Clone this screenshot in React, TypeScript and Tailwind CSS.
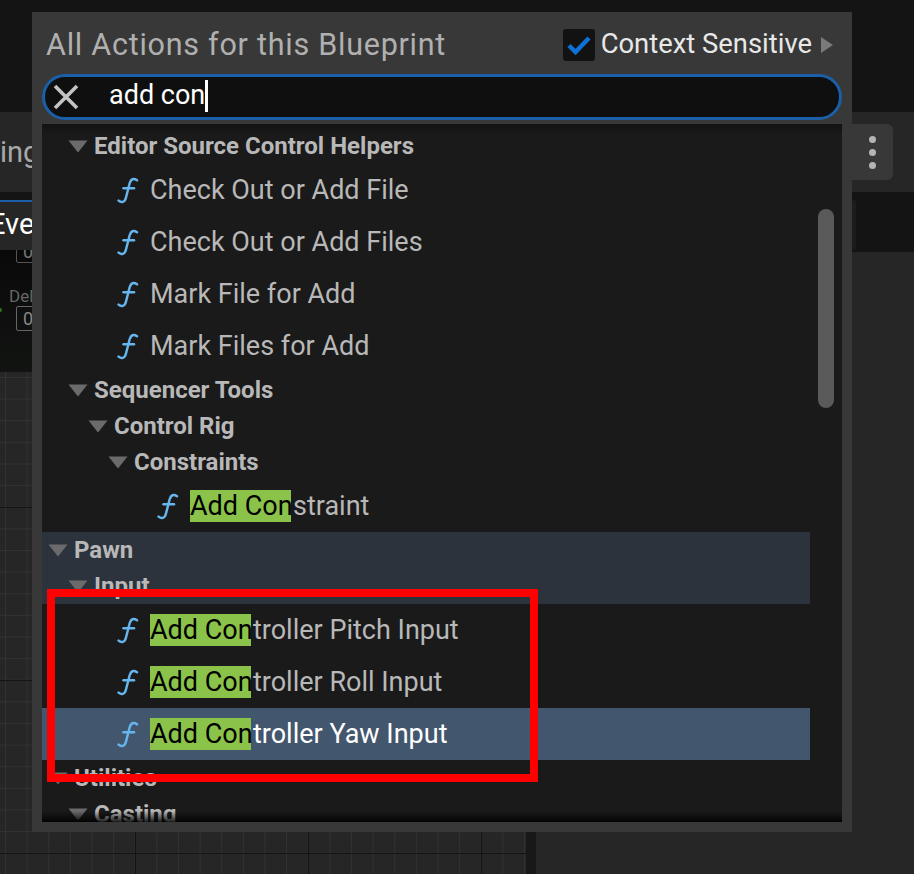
import React from "react";

const Tri = ({ className = "" }: { className?: string }) => (
  <svg width="20" height="13" viewBox="0 0 20 13" className={"shrink-0 " + className}>
    <path d="M0.5 0.5H19.5L10 12.5Z" fill="#6b6b6b" />
  </svg>
);

const Fn = () => (
  <svg width="22" height="27" viewBox="0 0 22 27" className="-ml-[1.5px] shrink-0" fill="none" stroke="#66b6ee" strokeWidth="2.5" strokeLinecap="round">
    <path d="M20 3.2C16.5 .8 13.8 2 12.6 6.5L9 20.5C7.8 25.6 4.3 26 1.6 23.6" />
    <path d="M6.5 11.2H17" />
  </svg>
);

const secPad: Record<number, string> = {
  0: "pl-[6px]",
  1: "pl-[26px]",
  2: "pl-[46px]",
  3: "pl-[66px]",
};

const Section = ({ level, label, band }: { level: number; label: string; band?: boolean }) => (
  <div className={"flex h-[36px] w-[768px] shrink-0 items-center gap-[6px] text-[24px] font-bold leading-none text-[#b8b8b8] " + secPad[level] + (band ? " bg-[#2c333d]" : "")}>
    <Tri />
    <span>{label}</span>
  </div>
);

const Func = ({ deep, hi, label, selected }: { deep?: boolean; hi?: string; label: string; selected?: boolean }) => (
  <div className={"flex h-[52px] w-[768px] shrink-0 items-center text-[27px] leading-none " + (deep ? "pl-[116px]" : "pl-[76px]") + (selected ? " bg-[#42566e] text-white" : " text-[#b8b8b8]")}>
    <span className="flex w-[32px] shrink-0 items-center"><Fn /></span>
    {hi && <span className="flex h-[32px] w-[101px] shrink-0 items-center whitespace-nowrap bg-[#8bc34a] text-black">{hi}</span>}
    <span className={hi ? "ml-[2px]" : ""}>{label}</span>
  </div>
);

export default function App() {
  return (
    <div className="relative flex h-[874px] w-[914px] flex-col overflow-hidden bg-[#141414] font-['Roboto',sans-serif]">
      {/* Editor behind the popup */}
      <div className="h-[112px] shrink-0 bg-[#141414]" />
      <div className="flex h-[80px] shrink-0 items-center justify-between bg-[#262626] pr-[21px]">
        <span className="text-[29px] leading-none text-[#a8a8a8]">ing</span>
        <div className="flex h-[56px] w-[60px] flex-col items-center justify-center gap-[6px] rounded-[6px] bg-[#383838] pl-[19px]">
          <i className="h-[7px] w-[7px] rounded-full bg-[#b4b4b4]" />
          <i className="h-[7px] w-[7px] rounded-full bg-[#b4b4b4]" />
          <i className="h-[7px] w-[7px] rounded-full bg-[#b4b4b4]" />
        </div>
      </div>
      <div className="flex min-h-0 flex-1">
        <div className="flex w-[526px] shrink-0 flex-col">
          <div className="h-[8px] shrink-0 bg-[#141414]" />
          <div className="h-[2px] shrink-0 bg-[#1a5fa8]" />
          <div className="flex h-[48px] shrink-0 items-center overflow-hidden bg-[#262626] pb-[4px] text-[29px] leading-none text-white">
            <span className="-ml-[11px]">Eve</span>
          </div>
          <div className="relative flex h-[122px] shrink-0 flex-col overflow-hidden bg-gradient-to-b from-[#090909] to-[#121412] pl-[16px]">
            <div className="-mt-[9px] flex h-[22px] w-[40px] shrink-0 items-center rounded-[2px] border border-[#555] pl-[6px] text-[18px] leading-none text-[#777]">0</div>
            <div className="mt-[25px] -ml-[7px] text-[17px] leading-none text-[#666]">Del</div>
            <div className="mt-[1px] flex h-[25px] w-[40px] shrink-0 items-center rounded-[2px] border border-[#666] pl-[6px] text-[18px] leading-none text-[#888]">0</div>
            <i className="absolute left-0 top-[58px] h-[4px] w-[2px] rounded-r bg-[#2f7a1a]" />
          </div>
          <div className="min-h-0 flex-1 bg-[#262626] bg-[linear-gradient(to_right,#141414_1px,transparent_1px),linear-gradient(to_bottom,#141414_1px,transparent_1px),linear-gradient(to_right,#323232_1px,transparent_1px),linear-gradient(to_bottom,#323232_1px,transparent_1px)] bg-[size:173px_173px,173px_173px,21.625px_21.625px,21.625px_21.625px] bg-[position:135px_135px,135px_135px,5px_5px,5px_5px]" />
        </div>
        <div className="w-[10px] shrink-0 bg-[#181818]" />
        <div className="flex min-w-0 flex-1 flex-col bg-[#262626]">
          <div className="h-[60px] shrink-0 bg-[#141414] pb-[2px] pt-[8px]">
            <div className="ml-[316px] h-full w-[4px] rounded-r-[3px] bg-[#1c1c1c]" />
          </div>
        </div>
      </div>

      {/* Action menu popup */}
      <div className="absolute left-[32px] top-[12px] flex h-[820px] w-[820px] flex-col bg-[#383838] px-[10px] pb-[10px]">
        <div className="flex h-[62px] shrink-0 items-center justify-between pl-[4px] pr-[9px] pt-[4px]">
          <span className="pt-[1px] text-[30.5px] leading-none tracking-[0.75px] text-[#b0b0b0]">All Actions for this Blueprint</span>
          <div className="flex items-center">
            <div className="flex h-[32px] w-[32px] items-center justify-center rounded-[3px] bg-[#121212]">
              <svg width="24" height="20" viewBox="0 0 24 20" fill="none" stroke="#0f70d7" strokeWidth="4.5">
                <path d="M2 10.5L8.5 17L22 3" />
              </svg>
            </div>
            <span className="ml-[6px] text-[27.4px] leading-none text-[#e8e8e8]">Context Sensitive</span>
            <svg width="12" height="16" viewBox="0 0 12 16" className="ml-[9px]">
              <path d="M0 0L12 8L0 16Z" fill="#7a7a7a" />
            </svg>
          </div>
        </div>
        <div className="flex h-[46px] shrink-0 items-center rounded-full border-[3px] border-[#1a5fa8] bg-[#0f0f0f] pl-[8px]">
          <svg width="26" height="26" viewBox="0 0 26 26" fill="none" stroke="#c4c4c4" strokeWidth="3.6" className="shrink-0">
            <path d="M2 2L24 24M24 2L2 24" />
          </svg>
          <span className="mb-[3px] ml-[30px] text-[27px] leading-none text-white">add con</span>
          <i className="mb-[2px] h-[32px] w-[3px] bg-white" />
        </div>
        <div className="relative mt-[4px] min-h-0 flex-1 overflow-hidden bg-[#1a1a1a] pt-[4px]">
          <div className="flex flex-col">
            <Section level={1} label="Editor Source Control Helpers" />
            <Func label="Check Out or Add File" />
            <Func label="Check Out or Add Files" />
            <Func label="Mark File for Add" />
            <Func label="Mark Files for Add" />
            <Section level={1} label="Sequencer Tools" />
            <Section level={2} label="Control Rig" />
            <Section level={3} label="Constraints" />
            <Func deep hi="Add Con" label="straint" />
            <Section level={0} label="Pawn" band />
            <Section level={1} label="Input" band />
            <Func hi="Add Con" label="troller Pitch Input" />
            <Func hi="Add Con" label="troller Roll Input" />
            <Func hi="Add Con" label="troller Yaw Input" selected />
            <Section level={0} label="Utilities" />
            <Section level={1} label="Casting" />
          </div>
          <div className="absolute right-[8px] top-[85px] h-[199px] w-[16px] rounded-full bg-[#5a5a5a]" />
          <div className="absolute inset-x-0 top-0 h-[10px] bg-gradient-to-b from-black/30 to-transparent" />
          <div className="absolute inset-x-0 bottom-0 h-[11px] bg-gradient-to-t from-black/85 to-transparent" />
        </div>
      </div>

      {/* Annotation */}
      <div className="absolute left-[47px] top-[589px] h-[193px] w-[491px] border-[8px] border-[#fe0000]" />
    </div>
  );
}
